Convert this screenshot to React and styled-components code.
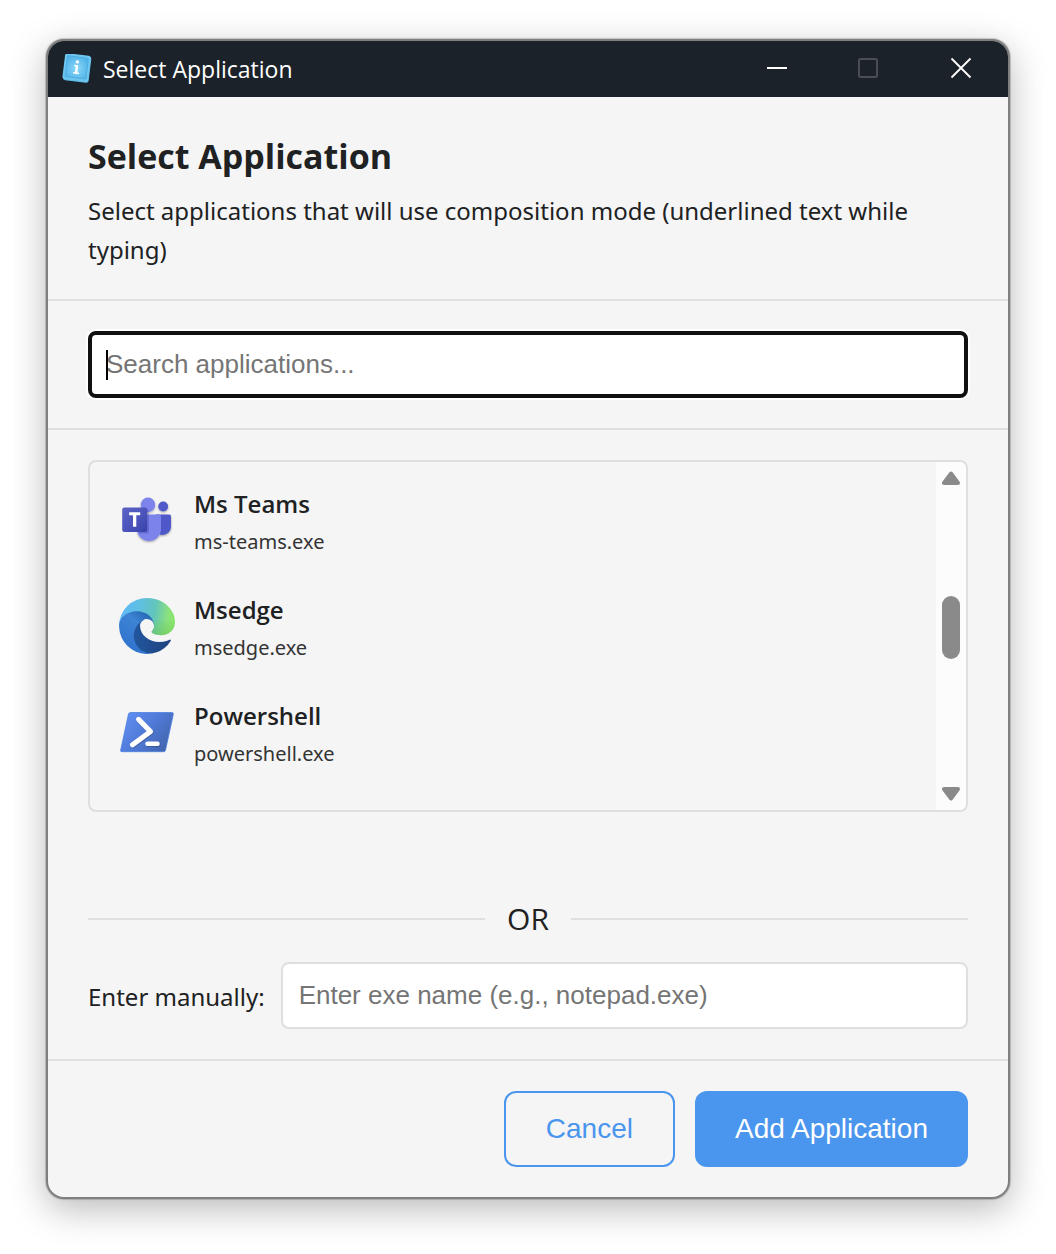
import React, { useState } from 'react';
import styled, { createGlobalStyle } from 'styled-components';

const GlobalStyle = createGlobalStyle`
  * {
    box-sizing: border-box;
  }
  body {
    margin: 0;
    background: #fff;
    color: #202122;
    font-family: 'Open Sans', 'Noto Sans', sans-serif;
  }
  h1, p, ul {
    margin: 0;
    padding: 0;
  }
`;

const Page = styled.div`
  padding: 39px 46px 55px;
`;

const Window = styled.main`
  overflow: hidden;
  background: #f5f5f5;
  border: 2px solid #7f7f7f;
  border-radius: 18px;
  box-shadow: 0 0 1px 1px rgba(0, 0, 0, 0.18), 0 10px 36px rgba(0, 0, 0, 0.28);
`;

const TitleBar = styled.header`
  display: flex;
  align-items: center;
  height: 56px;
  padding: 0 1px 0 14px;
  background: #1c2229;
  color: #fff;
`;

const TitleText = styled.span`
  flex: 1;
  margin-left: 11px;
  font-size: 23px;
  line-height: 32px;
`;

const WindowButton = styled.button`
  display: flex;
  align-items: center;
  justify-content: center;
  align-self: flex-start;
  width: 92px;
  height: 54px;
  padding: 0;
  border: 0;
  background: transparent;
  color: #fff;
  &:disabled {
    color: #4a4d55;
  }
`;

const Section = styled.section`
  padding: 30px 40px;
  border-bottom: 2px solid #dfdfdf;
`;

const Heading = styled.h1`
  font-size: 34px;
  font-weight: 700;
  line-height: 58px;
  margin-bottom: 6px;
`;

const Description = styled.p`
  font-family: 'Noto Sans', sans-serif;
  font-size: 24px;
  line-height: 39px;
`;

const SearchBox = styled.div`
  position: relative;
`;

const Caret = styled.span`
  position: absolute;
  left: 18px;
  top: 19px;
  width: 2px;
  height: 30px;
  background: #000;
`;

const TextInput = styled.input`
  display: block;
  flex: 1;
  width: 100%;
  min-width: 0;
  height: 67px;
  padding: 0 16px;
  border: 2px solid #dfdfdf;
  border-radius: 8px;
  outline: none;
  background: #fff;
  color: #202122;
  font-family: 'Liberation Sans', Arial, sans-serif;
  font-size: 26px;
  &::placeholder {
    color: #757575;
    opacity: 1;
  }
`;

const SearchInput = styled(TextInput)`
  padding: 0 14px;
  border: 4px solid #101010;
  box-shadow: 0 0 0 2px #fff;
  caret-color: transparent;
`;

const Body = styled.section`
  padding: 30px 40px;
`;

const ListBox = styled.div`
  display: flex;
  height: 352px;
  overflow: hidden;
  border: 2px solid #dfdfdf;
  border-radius: 8px;
`;

const AppList = styled.ul`
  flex: 1;
  padding: 5px 8px;
  overflow: hidden;
  list-style: none;
`;

const AppRow = styled.button`
  display: flex;
  align-items: center;
  gap: 19px;
  width: 100%;
  height: 106px;
  padding: 0 21px;
  border: 0;
  border-radius: 8px;
  background: transparent;
  color: inherit;
  font-family: inherit;
  text-align: left;
`;

const AppText = styled.span`
  padding-top: 4px;
`;

const AppName = styled.span`
  display: block;
  font-size: 24px;
  font-weight: 600;
  line-height: 39px;
`;

const AppExe = styled.span`
  display: block;
  color: #333;
  font-family: 'Noto Sans', sans-serif;
  font-size: 20px;
  line-height: 37px;
`;

const Scrollbar = styled.div`
  display: flex;
  flex-direction: column;
  align-items: center;
  width: 30px;
  padding: 8px 0;
  background: #fcfcfc;
`;

const ScrollTrack = styled.div`
  flex: 1;
  padding-top: 110px;
`;

const ScrollThumb = styled.div`
  width: 18px;
  height: 63px;
  border-radius: 9px;
  background: #8a8a8a;
`;

const Divider = styled.div`
  display: flex;
  align-items: center;
  gap: 22px;
  margin: 83px 0 19px;
  font-size: 30px;
  line-height: 48px;
  &::before,
  &::after {
    content: '';
    flex: 1;
    height: 2px;
    background: #dfdfdf;
  }
`;

const ManualRow = styled.div`
  display: flex;
  align-items: center;
  gap: 16px;
`;

const Label = styled.label`
  padding-top: 2px;
  font-family: 'Noto Sans', sans-serif;
  font-size: 24px;
  line-height: 39px;
`;

const Footer = styled.footer`
  display: flex;
  justify-content: flex-end;
  gap: 20px;
  padding: 30px 40px;
  border-top: 2px solid #dfdfdf;
`;

const Button = styled.button`
  height: 76px;
  padding: 0 40px;
  border: ${({ $primary }) => ($primary ? '0' : '2px solid #4a95ed')};
  border-radius: 12px;
  background: ${({ $primary }) => ($primary ? '#4a95ed' : 'transparent')};
  color: ${({ $primary }) => ($primary ? '#fff' : '#4a95ed')};
  font-family: 'Liberation Sans', Arial, sans-serif;
  font-size: 28px;
`;

function InfoIcon() {
  return (
    <svg width="30" height="30" viewBox="0 0 30 30" aria-hidden="true">
      <defs>
        <radialGradient id="info" cx="0.5" cy="0.55" r="0.65">
          <stop offset="0" stopColor="#8ad8fb" />
          <stop offset="1" stopColor="#4fb2e6" />
        </radialGradient>
      </defs>
      <g transform="rotate(7 15 15)">
        <rect x="2" y="1" width="26" height="26.5" rx="2.5" fill="#5cbcea" />
        <rect x="1.5" y="0.5" width="26" height="26" rx="2.5" fill="#6fc6f0" />
        <rect x="4" y="3" width="21" height="21" rx="1" fill="url(#info)" stroke="#4eaee0" />
        <circle cx="14.5" cy="7.9" r="1.7" fill="#fff" />
        <path d="M11.8 11.1h4v7.300h1.800v1.500h-6v-1.500h1.800v-5.800h-1.600z" fill="#fff" />
      </g>
    </svg>
  );
}

function TeamsIcon() {
  return (
    <svg width="56" height="56" viewBox="0 0 56 56" aria-hidden="true">
      <defs>
        <linearGradient id="teams" x1="0" y1="0" x2="1" y2="1">
          <stop offset="0" stopColor="#5a62c3" />
          <stop offset="0.5" stopColor="#4d55bd" />
          <stop offset="1" stopColor="#3940ab" />
        </linearGradient>
        <filter id="teamsShadow" x="-20%" y="-20%" width="140%" height="150%">
          <feDropShadow dx="0" dy="1" stdDeviation="0.8" floodOpacity="0.35" />
        </filter>
      </defs>
      <g filter="url(#teamsShadow)">
        <circle cx="44.200" cy="14.500" r="4.900" fill="#5059c9" />
        <path d="M37 22.500h13.200a1.800 1.800 0 0 1 1.800 1.800v10.400a8.300 8.300 0 0 1-8.300 8.300c-3 0-5.200-1.200-6.200-3z" fill="#5059c9" />
        <circle cx="29" cy="12.800" r="7.200" fill="#7b83eb" />
        <path d="M18 22.500h22a2 2 0 0 1 2 2V37a12 12 0 0 1-24 0z" fill="#7b83eb" />
      </g>
      <path d="M20 17h8a2 2 0 0 1 2 2v20.500a2 2 0 0 1-2 2h-8z" fill="#2f3590" opacity="0.28" />
      <rect x="3.200" y="15.500" width="25" height="24.500" rx="2.200" fill="url(#teams)" />
      <path d="M10.200 20.200h11v3h-3.900v11.500H14V23.200h-3.800z" fill="#fff" />
    </svg>
  );
}

function EdgeIcon() {
  return (
    <svg width="56" height="56" viewBox="0 0 256 256" aria-hidden="true">
      <defs>
        <linearGradient id="edgeDark" x1="63" y1="178" x2="241" y2="178" gradientUnits="userSpaceOnUse">
          <stop offset="0" stopColor="#2157a0" />
          <stop offset="1" stopColor="#20427f" />
        </linearGradient>
        <linearGradient id="edgeBlue" x1="150" y1="90" x2="46" y2="222" gradientUnits="userSpaceOnUse">
          <stop offset="0" stopColor="#2768b5" />
          <stop offset="0.35" stopColor="#3d84d4" />
          <stop offset="1" stopColor="#3174ce" />
        </linearGradient>
        <linearGradient id="edgeTop" x1="10" y1="75" x2="255" y2="110" gradientUnits="userSpaceOnUse">
          <stop offset="0" stopColor="#5fb9fa" />
          <stop offset="0.3" stopColor="#5fbfe4" />
          <stop offset="0.62" stopColor="#62c4bd" />
          <stop offset="0.88" stopColor="#8ae27c" />
          <stop offset="1" stopColor="#8ae56d" />
        </linearGradient>
        <linearGradient id="edgeGreenShade" x1="210" y1="95" x2="195" y2="178" gradientUnits="userSpaceOnUse">
          <stop offset="0" stopColor="#6cc35a" stopOpacity="0" />
          <stop offset="1" stopColor="#6cc35a" stopOpacity="0.6" />
        </linearGradient>
      </defs>
      <g transform="translate(-4.6 -5)">
        <path
          fill="url(#edgeDark)"
          d="M235.680 195.460a93.730 93.730 0 0 1-10.540 4.710 101.870 101.870 0 0 1-35.900 6.460c-47.320 0-88.540-32.550-88.540-74.320A31.480 31.480 0 0 1 117.130 105c-42.800 1.800-53.800 46.400-53.800 72.530 0 73.880 68.090 81.370 82.760 81.370 7.910 0 19.840-2.300 27-4.560l1.310-.44a128.340 128.340 0 0 0 66.600-52.800 4 4 0 0 0-5.320-5.640z"
        />
        <path
          fill="url(#edgeBlue)"
          d="M110.340 246.340A79.200 79.200 0 0 1 87.600 225a80.720 80.720 0 0 1 29.530-120c3.120-1.470 8.450-4.130 15.540-4a32.350 32.350 0 0 1 25.690 13 31.880 31.880 0 0 1 6.360 18.660c0-.21 24.460-79.600-80-79.600-43.900 0-80 41.660-80 78.210a130.150 130.150 0 0 0 12.110 56 128 128 0 0 0 156.380 67.110 75.550 75.550 0 0 1-62.780-8z"
        />
        <path
          fill="url(#edgeTop)"
          d="M156.940 153.780c-.81 1.050-3.300 2.500-3.300 5.660 0 2.610 1.700 5.120 4.720 7.230 14.380 10 41.490 8.680 41.560 8.680a59.560 59.560 0 0 0 30.270-8.350A61.380 61.380 0 0 0 260.620 114c.26-22.410-8-37.310-11.340-43.910C228.090 28.760 182.350 5 132.620 5a128 128 0 0 0-128 126.200c.48-36.540 36.800-66.050 80-66.050 3.500 0 23.460.34 42 10.070 16.340 8.580 24.900 18.940 30.850 29.210 6.180 10.670 7.280 24.150 7.280 29.520s-2.740 13.330-7.810 19.830z"
        />
        <path
          fill="url(#edgeGreenShade)"
          d="M156.940 153.780c-.81 1.050-3.300 2.500-3.300 5.660 0 2.610 1.700 5.120 4.720 7.230 14.380 10 41.490 8.680 41.560 8.680a59.560 59.560 0 0 0 30.270-8.350A61.380 61.380 0 0 0 260.620 114L157.470 104.430c6.180 10.670 7.280 24.150 7.280 29.520s-2.740 13.330-7.810 19.830z"
        />
      </g>
    </svg>
  );
}

function PowershellIcon() {
  return (
    <svg width="56" height="56" viewBox="0 0 56 56" aria-hidden="true">
      <defs>
        <linearGradient id="ps" x1="0" y1="0.2" x2="1" y2="0.8">
          <stop offset="0" stopColor="#5f8df2" />
          <stop offset="0.5" stopColor="#4f79d6" />
          <stop offset="1" stopColor="#4263aa" />
        </linearGradient>
        <filter id="psShadow" x="-20%" y="-20%" width="150%" height="150%">
          <feDropShadow dx="0.6" dy="0.8" stdDeviation="0.5" floodColor="#1c3468" floodOpacity="0.5" />
        </filter>
      </defs>
      <path d="M11.500 8.500h41.300a1.500 1.500 0 0 1 1.500 1.900L46.500 46.200a2 2 0 0 1-2 1.500H3A1.300 1.300 0 0 1 1.700 46L9.500 10a2 2 0 0 1 2-1.500z" fill="url(#ps)" stroke="#4a80e0" strokeWidth="0.8" />
      <g filter="url(#psShadow)" fill="none" stroke="#fff" strokeWidth="5" strokeLinecap="round" strokeLinejoin="round">
        <path d="M19.500 15.300L31.500 27.500 13.500 40.800" />
        <path d="M28.500 39.800h10" strokeWidth="4.400" />
      </g>
    </svg>
  );
}

function ScrollArrow({ down }) {
  return (
    <svg width="18" height="16" viewBox="0 0 18 16" aria-hidden="true">
      <path
        d={down ? 'M2 3h14L9 12.500z' : 'M2 13h14L9 3.500z'}
        fill="#8a8a8a"
        stroke="#8a8a8a"
        strokeWidth="4"
        strokeLinejoin="round"
      />
    </svg>
  );
}

const apps = [
  { name: 'Ms Teams', exe: 'ms-teams.exe', Icon: TeamsIcon },
  { name: 'Msedge', exe: 'msedge.exe', Icon: EdgeIcon },
  { name: 'Powershell', exe: 'powershell.exe', Icon: PowershellIcon },
];

export default function App() {
  const [search, setSearch] = useState('');
  const [manual, setManual] = useState('');

  return (
    <>
      <GlobalStyle />
      <Page>
        <Window>
          <TitleBar>
            <InfoIcon />
            <TitleText>Select Application</TitleText>
            <WindowButton type="button" aria-label="Minimize">
              <svg width="22" height="22" viewBox="0 0 22 22">
                <path d="M1 11h20" stroke="currentColor" strokeWidth="2" />
              </svg>
            </WindowButton>
            <WindowButton type="button" aria-label="Maximize" disabled>
              <svg width="22" height="22" viewBox="0 0 22 22">
                <rect x="1" y="2" width="18" height="18" rx="1.5" fill="none" stroke="currentColor" strokeWidth="2" />
              </svg>
            </WindowButton>
            <WindowButton type="button" aria-label="Close">
              <svg width="22" height="22" viewBox="0 0 22 22">
                <path d="M1.500 1.500l19 19M20.500 1.500l-19 19" stroke="currentColor" strokeWidth="1.800" />
              </svg>
            </WindowButton>
          </TitleBar>

          <Section>
            <Heading>Select Application</Heading>
            <Description>
              Select applications that will use composition mode (underlined text while typing)
            </Description>
          </Section>

          <Section>
            <SearchBox>
              <SearchInput
                type="text"
                aria-label="Search applications"
                placeholder="Search applications..."
                value={search}
                onChange={(e) => setSearch(e.target.value)}
              />
              {!search && <Caret />}
            </SearchBox>
          </Section>

          <Body>
            <ListBox>
              <AppList>
                {apps.map(({ name, exe, Icon }) => (
                  <li key={exe}>
                    <AppRow type="button" onClick={() => setManual(exe)}>
                      <Icon />
                      <AppText>
                        <AppName>{name}</AppName>
                        <AppExe>{exe}</AppExe>
                      </AppText>
                    </AppRow>
                  </li>
                ))}
              </AppList>
              <Scrollbar>
                <ScrollArrow />
                <ScrollTrack>
                  <ScrollThumb />
                </ScrollTrack>
                <ScrollArrow down />
              </Scrollbar>
            </ListBox>

            <Divider>OR</Divider>

            <ManualRow>
              <Label htmlFor="manual">Enter manually:</Label>
              <TextInput
                id="manual"
                type="text"
                placeholder="Enter exe name (e.g., notepad.exe)"
                value={manual}
                onChange={(e) => setManual(e.target.value)}
              />
            </ManualRow>
          </Body>

          <Footer>
            <Button type="button">Cancel</Button>
            <Button type="button" $primary>
              Add Application
            </Button>
          </Footer>
        </Window>
      </Page>
    </>
  );
}
